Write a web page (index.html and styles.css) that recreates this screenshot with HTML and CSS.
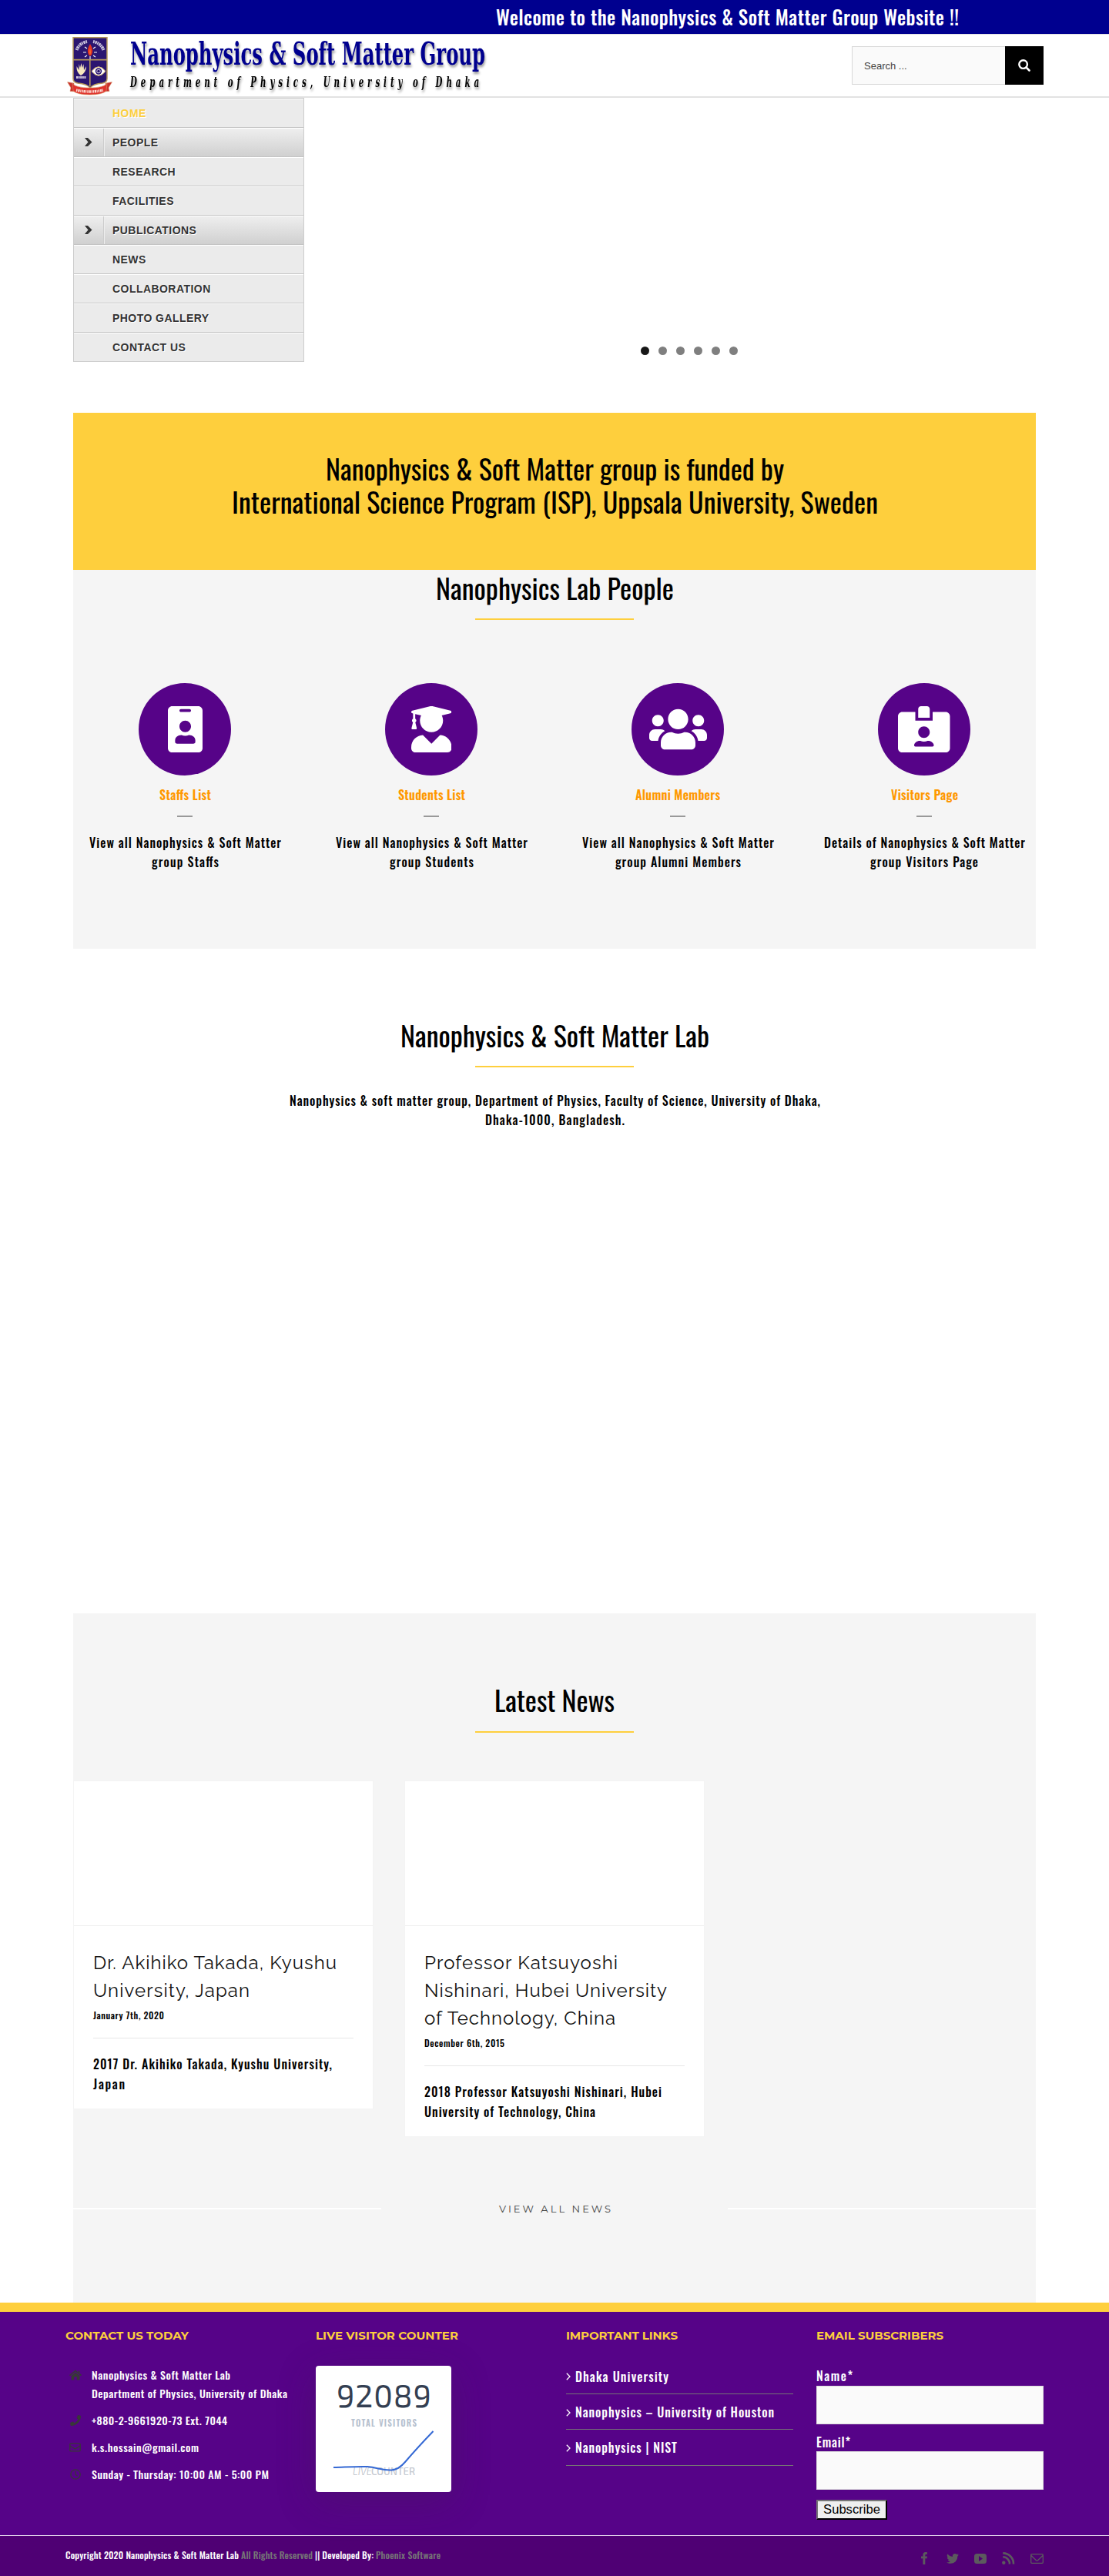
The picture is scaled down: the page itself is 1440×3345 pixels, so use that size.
FILE: index.html
```html
<!DOCTYPE html>
<html lang="en">
<head>
<meta charset="utf-8">
<title>Nanophysics &amp; Soft Matter Group</title>
<link rel="stylesheet" href="styles.css">
</head>
<body>
<div class="topbar">
  <svg class="t welcome" width="601" height="44"><text y="33" textLength="601">Welcome to the Nanophysics &amp; Soft Matter Group Website !!</text></svg>
</div>

<header class="header">
  <div class="header-inner">
    <svg class="logo" width="560" height="79" viewBox="0 0 560 79">
      <g transform="translate(2 3)">
        <path d="M8 .7H52V54Q52 59 46 60Q34 61 30 66Q26 61 14 60Q8 59 8 54Z" fill="#2b1670" stroke="#b79a5b" stroke-width="1.5"/>
        <path d="M8 29.6H52M29.8 29.6V64" stroke="#b79a5b" stroke-width="1.6" fill="none"/>
        <path d="M12.500 17Q16 8 26 6M34 6Q44 8 47.500 17" fill="none" stroke="#c9c3dc" stroke-width="4" stroke-dasharray="1.600 .8 2.400 .7"/>
        <path d="M30 9Q35 17 32 23Q30 26 28 23Q25 17 30 9Z" fill="#e5341f"/>
        <path d="M30 15Q31.500 20 30 23Q28.500 20 30 15Z" fill="#f6803a"/>
        <path d="M21 20H25M35 20H39M23 13L26 15M37 13L34 15M23 26L26 24M37 26L34 24M30 25V29" stroke="#fff" stroke-width="1.100"/>
        <path d="M18 50Q12 46 12.500 38L15.500 43L15.500 35L17 40L18.500 34L20 40L21.500 35L22 43L25 38Q25 46 18 50Z" fill="#f5e7bd"/>
        <path d="M12 52.500H25" stroke="#d8cfe0" stroke-width="3" stroke-dasharray="2 .6"/>
        <path d="M32 44.500Q41 33 50 44.500Q41 56 32 44.500Z" fill="#fff" stroke="#d9b968"/>
        <circle cx="41" cy="44.500" r="4.200" fill="#2b1670"/><circle cx="41" cy="44.500" r="2.300" fill="none" stroke="#fff" stroke-width=".8"/>
        <path d="M.5 58.500L9 60V68L13 71L4 70.500L5 66ZM58.500 58.500L50 60V68L46 71L55 70.500L54 66Z" fill="#c9302c" stroke="#d69a6a" stroke-width=".5"/>
        <path d="M7 60Q11 66 29.500 66Q48 66 52 60L51 70Q46 75 29.500 75Q13 75 8 70Z" fill="#df332c" stroke="#d69a6a" stroke-width=".6"/>
        <path d="M12 69Q29.500 73 47 69" fill="none" stroke="#fbdcd4" stroke-width="3.400" stroke-dasharray="1.500 .8 2.300 .7 1 .9"/>
      </g>
      <text class="logo-name" x="84" y="38.700" textLength="461" lengthAdjust="spacingAndGlyphs">Nanophysics &amp; Soft Matter Group</text>
      <text class="logo-sub" x="84" y="67.700" textLength="458" lengthAdjust="spacingAndGlyphs">Department of Physics, University of Dhaka</text>
    </svg>
    <form class="search">
      <span class="search-field">Search ...</span>
      <span class="search-btn"><svg width="16" height="16" viewBox="0 0 16 16"><circle cx="6.600" cy="6.600" r="5.300" fill="none" stroke="#fff" stroke-width="2.400"/><path d="M10.500 10.500L14.500 14.500" stroke="#fff" stroke-width="2.600" stroke-linecap="round"/></svg></span>
    </form>
  </div>
</header>

<main class="main">
  <section class="hero">
    <nav class="menu">
      <a class="active">Home</a>
      <a class="parent"><svg width="10" height="11" viewBox="0 0 10 11"><path d="M0 0H4L9.500 5.500L4 11H0L4.500 5.500Z" fill="#333"/></svg>People</a>
      <a>Research</a>
      <a>Facilities</a>
      <a class="parent"><svg width="10" height="11" viewBox="0 0 10 11"><path d="M0 0H4L9.500 5.500L4 11H0L4.500 5.500Z" fill="#333"/></svg>Publications</a>
      <a>News</a>
      <a>Collaboration</a>
      <a>Photo Gallery</a>
      <a>Contact Us</a>
    </nav>
    <div class="slider"><i class="on"></i><i></i><i></i><i></i><i></i><i></i></div>
  </section>

  <section class="funding">
    <svg class="t h" width="595" height="43"><text y="34" textLength="595">Nanophysics &amp; Soft Matter group is funded by</text></svg>
    <svg class="t h" width="839" height="43"><text y="34" textLength="839">International Science Program (ISP), Uppsala University, Sweden</text></svg>
  </section>

  <section class="people">
    <svg class="t h" width="309" height="43"><text y="34.500" textLength="309">Nanophysics Lab People</text></svg>
    <div class="rule"></div>
    <div class="people-grid">
      <div class="person">
        <div class="disc"><svg width="45" height="60" viewBox="0 0 384 512"><path d="M336 0H48C21.500 0 0 21.500 0 48v416c0 26.500 21.500 48 48 48h288c26.500 0 48-21.500 48-48V48c0-26.500-21.500-48-48-48zM144 32h96c8.800 0 16 7.200 16 16s-7.200 16-16 16h-96c-8.800 0-16-7.200-16-16s7.200-16 16-16zm48 128c35.300 0 64 28.700 64 64s-28.700 64-64 64-64-28.700-64-64 28.700-64 64-64zm112 236.800c0 10.600-10 19.200-22.400 19.200H102.400C90 416 80 407.400 80 396.800v-19.200c0-31.800 30.100-57.600 67.200-57.600h5c12.300 5.100 25.700 8 39.800 8s27.600-2.900 39.800-8h5c37.100 0 67.200 25.800 67.200 57.600v19.200z"/></svg></div>
        <svg class="t label" width="67" height="25"><text y="19" textLength="67">Staffs List</text></svg>
        <div class="dash"></div>
        <svg class="t b" width="249" height="25"><text y="19" textLength="249">View all Nanophysics &amp; Soft Matter</text></svg>
        <svg class="t b" width="87" height="25"><text y="19" textLength="87">group Staffs</text></svg>
      </div>
      <div class="person">
        <div class="disc"><svg width="52.500" height="60" viewBox="0 0 448 512"><path d="M319.400 320.600L224 416l-95.400-95.400C57.100 323.700 0 382.200 0 454.400v9.600c0 26.500 21.500 48 48 48h352c26.500 0 48-21.500 48-48v-9.600c0-72.200-57.100-130.700-128.600-133.800zM13.600 79.800l6.400 1.500v58.400c-7 4.200-12 11.500-12 20.300 0 8.400 4.600 15.400 11.100 19.700L3.500 242c-1.700 6.900 2.100 14 7.600 14h41.800c5.500 0 9.300-7.100 7.600-14l-15.600-62.300C51.400 175.400 56 168.400 56 160c0-8.800-5-16.100-12-20.300V87.100l66 15.900c-8.600 17.200-14 36.400-14 57 0 70.700 57.300 128 128 128s128-57.300 128-128c0-20.600-5.300-39.800-14-57l96.300-23.200c18.200-4.400 18.200-27.100 0-31.500l-190.400-46c-13-3.100-26.700-3.100-39.700 0L13.600 48.200c-18.100 4.400-18.100 27.200 0 31.600z"/></svg></div>
        <svg class="t label" width="87" height="25"><text y="19" textLength="87">Students List</text></svg>
        <div class="dash"></div>
        <svg class="t b" width="249" height="25"><text y="19" textLength="249">View all Nanophysics &amp; Soft Matter</text></svg>
        <svg class="t b" width="109" height="25"><text y="19" textLength="109">group Students</text></svg>
      </div>
      <div class="person">
        <div class="disc"><svg width="75" height="60" viewBox="0 0 640 512"><path d="M96 224c35.300 0 64-28.700 64-64s-28.700-64-64-64-64 28.700-64 64 28.700 64 64 64zm448 0c35.300 0 64-28.700 64-64s-28.700-64-64-64-64 28.700-64 64 28.700 64 64 64zm32 32h-64c-17.600 0-33.500 7.100-45.100 18.600 40.300 22.100 68.900 62 75.100 109.400h66c17.700 0 32-14.300 32-32v-32c0-35.300-28.700-64-64-64zm-256 0c61.900 0 112-50.100 112-112S381.900 32 320 32 208 82.100 208 144s50.100 112 112 112zm76.800 32h-8.300c-20.800 10-43.900 16-68.500 16s-47.600-6-68.500-16h-8.300C179.600 288 128 339.600 128 403.200V432c0 26.500 21.500 48 48 48h288c26.500 0 48-21.500 48-48v-28.800c0-63.600-51.600-115.200-115.200-115.200zm-223.700-13.400C161.500 263.100 145.600 256 128 256H64c-35.300 0-64 28.700-64 64v32c0 17.700 14.300 32 32 32h65.900c6.300-47.400 34.900-87.300 75.200-109.400z"/></svg></div>
        <svg class="t label" width="110" height="25"><text y="19" textLength="110">Alumni Members</text></svg>
        <div class="dash"></div>
        <svg class="t b" width="249" height="25"><text y="19" textLength="249">View all Nanophysics &amp; Soft Matter</text></svg>
        <svg class="t b" width="163" height="25"><text y="19" textLength="163">group Alumni Members</text></svg>
      </div>
      <div class="person">
        <div class="disc"><svg width="67.500" height="60" viewBox="0 0 576 512"><path d="M528 64H384v96H192V64H48C21.500 64 0 85.500 0 112v352c0 26.500 21.500 48 48 48h480c26.500 0 48-21.500 48-48V112c0-26.500-21.500-48-48-48zM288 224c35.300 0 64 28.700 64 64s-28.700 64-64 64-64-28.700-64-64 28.700-64 64-64zm93.300 224H194.700c-10.400 0-18.800-10-15.600-19.800 8.300-25.600 32.400-44.200 60.900-44.200h8.200c12.300 5.100 25.700 8 39.800 8s27.600-2.900 39.800-8h8.200c28.400 0 52.500 18.500 60.900 44.200 3.200 9.900-5.200 19.800-15.600 19.800zM352 32c0-17.700-14.300-32-32-32h-64c-17.700 0-32 14.300-32 32v96h128V32z"/></svg></div>
        <svg class="t label" width="87" height="25"><text y="19" textLength="87">Visitors Page</text></svg>
        <div class="dash"></div>
        <svg class="t b" width="261" height="25"><text y="19" textLength="261">Details of Nanophysics &amp; Soft Matter</text></svg>
        <svg class="t b" width="140" height="25"><text y="19" textLength="140">group Visitors Page</text></svg>
      </div>
    </div>
  </section>

  <section class="lab">
    <svg class="t h" width="401" height="43"><text y="34" textLength="401">Nanophysics &amp; Soft Matter Lab</text></svg>
    <div class="rule"></div>
    <svg class="t b" width="689" height="25"><text y="19" textLength="689">Nanophysics &amp; soft matter group, Department of Physics, Faculty of Science, University of Dhaka,</text></svg>
    <svg class="t b" width="181" height="25"><text y="19" textLength="181">Dhaka-1000, Bangladesh.</text></svg>
  </section>

  <section class="news">
    <svg class="t h" width="156" height="43"><text y="34" textLength="156">Latest News</text></svg>
    <div class="rule"></div>
    <div class="cards">
      <article class="card">
        <div class="card-img"></div>
        <div class="card-body">
          <svg class="t ttl" width="316" height="36"><text y="26" textLength="316">Dr. Akihiko Takada, Kyushu</text></svg>
          <svg class="t ttl" width="203" height="36"><text y="26" textLength="203">University, Japan</text></svg>
          <svg class="t date" width="92" height="20"><text y="15" textLength="92">January 7th, 2020</text></svg>
          <div class="sep"></div>
          <svg class="t b" width="310" height="25"><text y="19" textLength="310">2017 Dr. Akihiko Takada, Kyushu University,</text></svg>
          <svg class="t b" width="41" height="25"><text y="19.500" textLength="41">Japan</text></svg>
        </div>
      </article>
      <article class="card">
        <div class="card-img"></div>
        <div class="card-body">
          <svg class="t ttl" width="251" height="36"><text y="26" textLength="251">Professor Katsuyoshi</text></svg>
          <svg class="t ttl" width="315" height="36"><text y="26" textLength="315">Nishinari, Hubei University</text></svg>
          <svg class="t ttl" width="248" height="36"><text y="26" textLength="248">of Technology, China</text></svg>
          <svg class="t date" width="104" height="20"><text y="15" textLength="104">December 6th, 2015</text></svg>
          <div class="sep"></div>
          <svg class="t b" width="308" height="25"><text y="19" textLength="308">2018 Professor Katsuyoshi Nishinari, Hubei</text></svg>
          <svg class="t b" width="222" height="25"><text y="19.500" textLength="222">University of Technology, China</text></svg>
        </div>
      </article>
    </div>
    <div class="viewall">
      <span></span>
      <svg class="t va" width="145" height="20"><text y="15" textLength="145">VIEW ALL NEWS</text></svg>
      <span></span>
    </div>
  </section>
</main>

<footer class="footer">
  <div class="footer-cols">
    <div class="col">
      <svg class="t fh" width="160" height="20"><text y="15.300" textLength="160">CONTACT US TODAY</text></svg>
      <ul class="contacts">
        <li><span class="ic"><svg width="16" height="14" viewBox="0 0 16 14"><path d="M8 3.500L13.500 8V12.500Q13.500 13.500 12.500 13.500H9.700V9.500H6.300V13.500H3.500Q2.500 13.500 2.500 12.500V8ZM8 .5L11.500 3.400V1.500H13.500V5L16 7L15 8.200L8 2.500L1 8.200L0 7Z"/></svg></span>
          <div><svg class="t c" width="180" height="24"><text y="18" textLength="180">Nanophysics &amp; Soft Matter Lab</text></svg>
          <svg class="t c" width="254" height="24"><text y="18" textLength="254">Department of Physics, University of Dhaka</text></svg></div></li>
        <li><span class="ic"><svg width="14" height="14" viewBox="0 0 512 512"><path d="M493.400 24.600l-104-24c-11.300-2.600-22.900 3.300-27.500 13.900l-48 112c-4.200 9.800-1.400 21.300 6.900 28l60.600 49.600c-36 76.700-98.900 140.500-177.200 177.200l-49.600-60.600c-6.800-8.300-18.200-11.100-28-6.900l-112 48C3.900 366.500-2 378.100.6 389.400l24 104C27.100 504.200 36.700 512 48 512c256.100 0 464-207.500 464-464 0-11.200-7.700-20.900-18.600-23.400z"/></svg></span>
          <svg class="t c" width="176" height="24"><text y="18" textLength="176">+880-2-9661920-73 Ext. 7044</text></svg></li>
        <li><span class="ic"><svg class="line" width="15" height="12" viewBox="0 0 15 12"><rect x=".8" y=".8" width="13.400" height="10" rx="1.200"/><path d="M1 4L7.500 8L14 4"/></svg></span>
          <svg class="t c" width="139" height="24"><text y="18" textLength="139">k.s.hossain@gmail.com</text></svg></li>
        <li><span class="ic"><svg class="line" width="14" height="14" viewBox="0 0 14 14"><circle cx="7" cy="7" r="6.200"/><path d="M7 3V7.300L9.500 9"/></svg></span>
          <svg class="t c" width="230" height="24"><text y="18" textLength="230">Sunday - Thursday: 10:00 AM - 5:00 PM</text></svg></li>
      </ul>
    </div>
    <div class="col">
      <svg class="t fh" width="185" height="20"><text y="15.300" textLength="185">LIVE VISITOR COUNTER</text></svg>
      <svg class="counter" width="176" height="164" viewBox="0 0 176 164">
        <text class="num" x="27" y="53.500" textLength="123">92089</text>
        <text class="tv" x="46" y="79" textLength="85">TOTAL VISITORS</text>
        <text class="live" x="48" y="142" textLength="25">LIVE</text>
        <text class="cnt" x="72" y="142" textLength="57">COUNTER</text>
        <path d="M23 132C40 131.500 55 130.500 67 131C80 132 86 136 98 135.500C106 135 111 131 116 125C128 111 140 98 152.500 85" fill="none" stroke="#3569d4" stroke-width="2"/>
      </svg>
    </div>
    <div class="col">
      <svg class="t fh" width="145" height="20"><text y="15.300" textLength="145">IMPORTANT LINKS</text></svg>
      <ul class="links">
        <li><svg class="chev" width="6" height="10" viewBox="0 0 6 10"><path d="M.8.8L5 5L.8 9.200"/></svg><svg class="t w" width="121" height="25"><text y="19" textLength="121">Dhaka University</text></svg></li>
        <li><svg class="chev" width="6" height="10" viewBox="0 0 6 10"><path d="M.8.8L5 5L.8 9.200"/></svg><svg class="t w" width="258" height="25"><text y="19" textLength="258">Nanophysics – University of Houston</text></svg></li>
        <li><svg class="chev" width="6" height="10" viewBox="0 0 6 10"><path d="M.8.8L5 5L.8 9.200"/></svg><svg class="t w" width="132" height="25"><text y="19" textLength="132">Nanophysics | NIST</text></svg></li>
      </ul>
    </div>
    <div class="col">
      <svg class="t fh" width="165" height="20"><text y="15.300" textLength="165">EMAIL SUBSCRIBERS</text></svg>
      <form class="subscribe">
        <svg class="t w" width="47" height="26"><text y="20" textLength="47">Name*</text></svg>
        <input type="text" aria-label="Name">
        <svg class="t w second" width="44" height="25"><text y="20" textLength="44">Email*</text></svg>
        <input type="text" aria-label="Email">
        <button type="button">Subscribe</button>
      </form>
    </div>
  </div>
  <div class="bottom">
    <div class="bottom-inner">
      <div class="copy">
        <svg class="t s" width="225" height="20"><text y="15" textLength="225">Copyright 2020 Nanophysics &amp; Soft Matter Lab</text></svg>
        <svg class="t s dim" width="93" height="20"><text y="15" textLength="93">All Rights Reserved</text></svg>
        <svg class="t s" width="76" height="20"><text y="15" textLength="76">|| Developed By:</text></svg>
        <svg class="t s dim" width="84" height="20"><text y="15" textLength="84">Phoenix Software</text></svg>
      </div>
      <div class="social">
        <svg width="8" height="16" viewBox="0 0 8 16"><path d="M8 .2V2.800H6.500Q5.300 2.800 5.300 4V5.600H8L7.600 8.300H5.300V16H2.400V8.300H0V5.600H2.400V3.600Q2.400 0 5.900 0Z"/></svg>
        <svg width="16" height="13" viewBox="0 0 16 13"><path d="M16 1.500L14.400 3.300Q14.500 7.500 11.500 10.600Q7.500 14 1.800 12.300L0 11.600Q3 11.700 4.800 10.200Q2.500 9.900 1.800 7.900H3.200Q.8 7 .7 4.600L2.100 5Q-.1 3.200 1.200.6Q4 3.800 7.900 4Q7.400.3 11 0Q12.400 0 13.500 1L15.500.3L14.300 2Z"/></svg>
        <svg width="16" height="13" viewBox="0 0 16 13"><path fill-rule="evenodd" d="M3.500 0H12.500Q16 0 16 3.500V9.500Q16 13 12.500 13H3.500Q0 13 0 9.500V3.500Q0 0 3.500 0ZM6 3V10L11 6.500Z"/></svg>
        <svg width="17" height="16" viewBox="0 0 17 16"><circle cx="2.300" cy="13.700" r="2.200"/><path d="M1.300 6.300A8.600 8.600 0 0 1 9.900 15.500M1.300 1.400A13.600 13.600 0 0 1 15 15.500" fill="none" stroke="#5c5a5e" stroke-width="2.600"/></svg>
        <svg width="17" height="13" viewBox="0 0 17 13"><path fill="none" stroke="#5c5a5e" stroke-width="1.300" d="M1.800.7H15.200Q16.300.7 16.300 1.800V11.200Q16.300 12.300 15.200 12.300H1.800Q.7 12.300.7 11.200V1.800Q.7.7 1.800.7ZM1 2.500L7.500 8.700Q8.500 9.400 9.500 8.700L16 2.500"/></svg>
      </div>
    </div>
  </div>
</footer>
</body>
</html>
```
FILE: styles.css
```css
* { box-sizing: border-box; }
body { margin: 0; background: #fff; font-family: "Liberation Sans", Arial, sans-serif; color: #000; }
ul { list-style: none; margin: 0; padding: 0; }
svg { display: block; flex: none; }

/* single-line text, set to a fixed measure */
.t { overflow: visible; font-family: "Oswald", "Roboto", sans-serif; fill: #000; }
.h { font-size: 36px; font-weight: 400; margin: 0 auto; }
.b { font-size: 16px; font-weight: 500; }
.label { font-size: 16px; font-weight: 600; fill: #ff9800; }
.ttl { font-family: "Raleway", "Lato", sans-serif; font-size: 24px; font-weight: 400; fill: #111; }
.date { font-size: 12px; font-weight: 500; }
.va { font-family: "Montserrat", "Inter", sans-serif; font-size: 13px; fill: #444; }
.fh { font-family: "Montserrat", "Inter", sans-serif; font-size: 15px; font-weight: 700; fill: #fdcf3d; }
.c { font-size: 14px; font-weight: 500; fill: #fff; }
.w { font-size: 16px; font-weight: 500; fill: #fff; }
.s { font-size: 12px; font-weight: 500; fill: #fff; }
.s.dim { fill: #777; }

.topbar { height: 44px; background: #00008f; padding-left: 644px; }
.welcome { font-size: 25px; font-weight: 500; fill: #fff; }

.header { height: 83px; border-top: 1px solid #e0e0e0; border-bottom: 2px solid #e2e2e2; }
.header-inner { width: 1270px; margin: 0 auto; display: flex; justify-content: space-between; }
.logo { overflow: visible; }
.logo-name { font: 700 40.7px "DejaVu Serif", serif; fill: #00008f; filter: drop-shadow(1px 3px 1.5px rgba(0,0,0,.4)); }
.logo-sub { font: italic 700 18.8px "DejaVu Serif", serif; letter-spacing: 9px; fill: #000; filter: drop-shadow(1px 3px 1.5px rgba(0,0,0,.4)); }
.search { display: flex; margin-top: 15px; height: 50px; }
.search-field { width: 199px; padding-left: 15px; border: 1px solid #d8d8d8; border-right: 0; background: #fafafa; font-size: 13px; line-height: 49px; color: #444; }
.search-btn { width: 50px; background: #000; display: flex; align-items: center; justify-content: center; }

.main { width: 1250px; margin: 0 auto; }
.hero { height: 409px; display: flex; align-items: flex-start; }
.menu { width: 300px; border: 1px solid #ccc; border-top: 0; }
.menu a { display: flex; align-items: center; height: 38px; padding-left: 50px; border-top: 1px solid #c4c4c4; box-shadow: inset 0 1px #fff; background: #ebebeb; font-size: 14px; font-weight: 700; letter-spacing: .45px; text-transform: uppercase; color: #333; text-shadow: 1px 1px 0 #fff; }
.menu a.active { color: #fdcf3d; }
.menu a.parent { padding-left: 14px; background: linear-gradient(90deg, transparent 38px, #ccc 38px, #ccc 39px, #eee 39px, #eee 40px, transparent 40px), linear-gradient(#efefef, #d0d0d0); }
.parent svg { margin-right: 26px; }
.slider { margin-left: 50px; flex: 1; height: 334px; display: flex; gap: 12px; align-items: flex-end; justify-content: center; }
.slider i { width: 11px; height: 11px; border-radius: 50%; background: #7f7f7f; }
.slider i.on { background: #171717; }

.funding { height: 204px; padding-top: 54px; background: #fecf3d; }
.rule { width: 206px; height: 2px; margin: 16px auto 0; background: #fecf3d; }
.people { height: 492px; padding-top: 4px; background: #f5f5f5; }
.people-grid { display: grid; grid-template-columns: repeat(4, 320px); margin: 82px -15px 0; }
.person { display: flex; flex-direction: column; align-items: center; }
.disc { width: 120px; height: 120px; border-radius: 50%; background: #560388; display: flex; align-items: center; justify-content: center; fill: #fff; margin-bottom: 13px; }
.dash { width: 20px; height: 2px; background: #999; margin: 14px 0 21px; }

.lab { height: 863px; padding-top: 94px; }
.lab .rule { margin: 15px auto 31px; }
.lab .b { margin: 0 auto; }

.news { height: 895px; padding-top: 94px; background: #f5f5f5; }
.cards { display: grid; grid-template-columns: repeat(3, 390px); gap: 40px; align-items: start; margin-top: 62px; }
.card { background: #fff; border: 1px solid #f4f4f4; }
.card-img { height: 188px; border-bottom: 1px solid #f0f0f0; }
.card-body { padding: 30px 25px 20px; }
.date { margin-top: 4px; }
.sep { height: 1px; margin: 19px 0 21px; background: #e6e6e6; }
.viewall { display: flex; justify-content: space-between; align-items: center; margin-top: 83px; }
.viewall span { width: 400px; height: 2px; background: #fff; }

.footer { background: #560388; border-top: 12px solid #fecf3d; }
.footer-cols { width: 1270px; height: 290px; margin: 0 auto; padding-top: 21px; display: grid; grid-template-columns: repeat(4, 295px); gap: 30px; }
.fh { margin-bottom: 29px; }
.contacts { display: grid; gap: 11px; }
.contacts li { display: flex; gap: 9px; }
.ic { width: 25px; height: 24px; display: flex; align-items: center; justify-content: center; fill: #383838; }
.line { fill: none; stroke: #383838; stroke-width: 1.3; }
.counter { background: #fff; border-radius: 4px; box-shadow: 0 12px 50px rgba(60,40,60,.25); }
.num { font: 400 41px "Exo 2", "Roboto", sans-serif; fill: #343f52; }
.tv { font: 600 11px "Oswald", "Roboto", sans-serif; fill: #b6c1cf; }
.live { font: italic 300 13px "Exo 2", "Roboto", sans-serif; fill: #b9bec6; }
.cnt { font: 500 13px "Exo 2", "Roboto", sans-serif; fill: #c3c8cf; }
.links li { display: flex; align-items: center; gap: 6px; height: 46px; padding: 11px 0 9px; border-bottom: 1px solid #747474; }
.links li:first-child { height: 37px; padding-top: 1px; }
.links li:last-child { height: 47px; padding-bottom: 10px; }
.chev { fill: none; stroke: #fff; stroke-width: 1.3; }
.subscribe input { display: block; width: 295px; height: 50px; border: 1px solid #ddd; background: #fafafa; padding: 0; }
.subscribe .second { margin-top: 10px; }
.subscribe button { display: block; width: 92px; height: 26px; margin-top: 13px; padding: 0; border: 2px outset #767676; border-color: #767676 #222 #222 #767676; background: #efefef; font: 16.6px "Liberation Sans", Arial, sans-serif; line-height: 20px; color: #000; }
.bottom { height: 53px; border-top: 1px solid #e8dff0; background: #4f0074; }
.bottom-inner { width: 1270px; margin: 0 auto; display: flex; justify-content: space-between; }
.copy { display: flex; gap: 3px; padding-top: 15px; }
.social { display: flex; align-items: center; gap: 20px; height: 16px; margin-top: 21px; fill: #5c5a5e; }
.social svg:first-child { margin-right: 5px; }
```
